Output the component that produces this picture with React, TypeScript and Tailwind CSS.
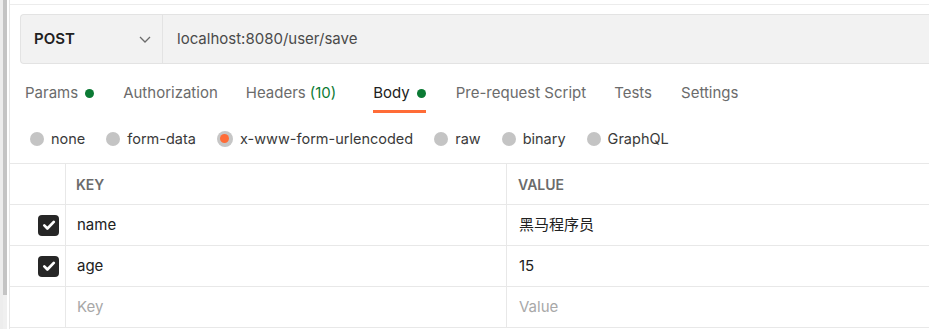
import { ReactNode } from "react"

const font = { fontFamily: "Inter, 'Noto Sans CJK SC', sans-serif" }

function Dot() {
  return <span className="ml-[7px] inline-block h-[9px] w-[9px] rounded-full bg-[#0b7a34]" />
}

function Tab({ label, active, children, className = "" }: { label: string; active?: boolean; children?: ReactNode; className?: string }) {
  return (
    <div className={`relative flex h-full items-center ${className}`}>
      <span className={active ? "text-[#212121]" : "text-[#6b6b6b]"}>{label}</span>
      {children}
      {active && <div className="absolute bottom-[9px] left-0 right-0 h-[3px] bg-[#ff6c37]" />}
    </div>
  )
}

function Radio({ label, checked }: { label: string; checked?: boolean }) {
  return (
    <div className="flex items-center gap-[7px]">
      {checked ? (
        <span className="flex h-[16px] w-[16px] items-center justify-center rounded-full bg-[#c6c6c6]">
          <span className="h-[9px] w-[9px] rounded-full bg-[#ff6c37]" />
        </span>
      ) : (
        <span className="h-[14px] w-[14px] rounded-full bg-[#c4c4c4]" />
      )}
      <span className="text-[#3a3a3a]">{label}</span>
    </div>
  )
}

function Check() {
  return (
    <span className="flex h-[21px] w-[21px] items-center justify-center rounded-[4px] bg-[#262626]">
      <svg width="14" height="14" viewBox="0 0 14 14" fill="none">
        <path d="M2.3 7.4l3.1 3.1L11.8 3.9" stroke="white" strokeWidth="2.7" strokeLinecap="round" strokeLinejoin="round" />
      </svg>
    </span>
  )
}

function Row({ k, v, checked, placeholder }: { k: string; v: string; checked?: boolean; placeholder?: boolean }) {
  const text = placeholder ? "text-[#a8a8a8]" : "text-[#212121]"
  return (
    <div className="flex h-[41px] border-b border-[#e8e8e8]">
      <div className="flex w-[56px] shrink-0 items-center justify-end border-r border-[#e8e8e8] pr-[6px]">
        {checked && <Check />}
      </div>
      <div className={`flex w-[441px] shrink-0 items-center border-r border-[#e8e8e8] pl-[11px] ${text}`}>{k}</div>
      <div className={`flex flex-1 items-center pl-[12px] ${text}`}>{v}</div>
    </div>
  )
}

export default function App() {
  return (
    <div className="flex h-[329px] w-[929px] overflow-hidden bg-white text-[15px]" style={font}>
      {/* left scroll strip */}
      <div className="flex w-[9px] shrink-0">
        <div className="w-[3px] bg-[#ededed]" />
        <div className="flex w-[4px] flex-col bg-[#f0f0f0]">
          <div className="h-[295px] bg-[#c4c4c4]" />
        </div>
        <div className="w-[2px] bg-white" />
      </div>

      <div className="flex min-w-0 flex-1 flex-col border-l border-[#e6e6e6] pt-[4px]">
        <div className="border-t border-[#ececec] pl-[10px] pt-[9px]">
          {/* url bar */}
          <div className="flex h-[50px] rounded-l-[4px] border border-r-0 border-[#e3e3e3] bg-[#f2f2f2]">
            <div className="flex w-[142px] shrink-0 items-center justify-between border-r border-[#e3e3e3] pl-[13px] pr-[11px]">
              <span className="font-semibold text-[#212121]">POST</span>
              <svg width="12" height="7" viewBox="0 0 12 7" fill="none">
                <path d="M1 1l5 5 5-5" stroke="#6b6b6b" strokeWidth="1.3" />
              </svg>
            </div>
            <div className="flex items-center pl-[14px] text-[#4a4a4a]">localhost:8080/user/save</div>
          </div>
        </div>

        {/* tabs */}
        <div className="flex h-[58px] items-center gap-[30px] pl-[15px]">
          <Tab label="Params">
            <Dot />
          </Tab>
          <Tab label="Authorization" className="-ml-[1px]" />
          <Tab label="Headers" className="-ml-[2px]">
            <span className="ml-[4px] text-[#0b7a34]">(10)</span>
          </Tab>
          <Tab label="Body" active className="ml-[7px]">
            <Dot />
          </Tab>
          <Tab label="Pre-request Script" />
          <Tab label="Tests" className="-ml-[2px]" />
          <Tab label="Settings" className="-ml-[1px]" />
        </div>

        {/* body types */}
        <div className="flex h-[41px] items-center gap-[21px] pb-[8px] pl-[20px] text-[14.5px]">
          <Radio label="none" />
          <Radio label="form-data" />
          <Radio label="x-www-form-urlencoded" checked />
          <Radio label="raw" />
          <Radio label="binary" />
          <Radio label="GraphQL" />
        </div>

        {/* table */}
        <div className="border-t border-[#e8e8e8]">
          <div className="flex h-[41px] border-b border-[#e8e8e8] text-[14px] font-semibold text-[#6b6b6b]">
            <div className="w-[56px] shrink-0 border-r border-[#e8e8e8]" />
            <div className="flex w-[441px] shrink-0 items-center border-r border-[#e8e8e8] pl-[10px]">KEY</div>
            <div className="flex flex-1 items-center pl-[11px]">VALUE</div>
          </div>
          <Row k="name" v="黑马程序员" checked />
          <Row k="age" v="15" checked />
          <Row k="Key" v="Value" placeholder />
        </div>
      </div>
    </div>
  )
}
